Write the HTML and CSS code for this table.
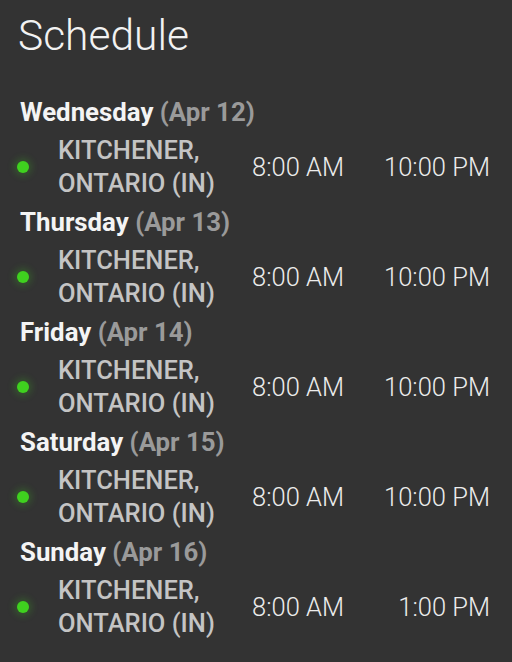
FILE: index.html
```html
<!DOCTYPE html>
<html>
<head>
<meta charset="utf-8">
<link rel="stylesheet" href="styles.css">
</head>
<body>
<div class="page">
  <h1 class="title">Schedule</h1>
  <div class="day">
    <div class="day-head"><span class="day-name">Wednesday</span> <span class="day-date">(Apr 12)</span></div>
    <div class="row"><span class="dot"></span><div class="loc">KITCHENER,<br>ONTARIO (IN)</div><div class="start">8:00 AM</div><div class="end">10:00 PM</div></div>
  </div>
  <div class="day">
    <div class="day-head"><span class="day-name">Thursday</span> <span class="day-date">(Apr 13)</span></div>
    <div class="row"><span class="dot"></span><div class="loc">KITCHENER,<br>ONTARIO (IN)</div><div class="start">8:00 AM</div><div class="end">10:00 PM</div></div>
  </div>
  <div class="day">
    <div class="day-head"><span class="day-name">Friday</span> <span class="day-date">(Apr 14)</span></div>
    <div class="row"><span class="dot"></span><div class="loc">KITCHENER,<br>ONTARIO (IN)</div><div class="start">8:00 AM</div><div class="end">10:00 PM</div></div>
  </div>
  <div class="day">
    <div class="day-head"><span class="day-name">Saturday</span> <span class="day-date">(Apr 15)</span></div>
    <div class="row"><span class="dot"></span><div class="loc">KITCHENER,<br>ONTARIO (IN)</div><div class="start">8:00 AM</div><div class="end">10:00 PM</div></div>
  </div>
  <div class="day">
    <div class="day-head"><span class="day-name">Sunday</span> <span class="day-date">(Apr 16)</span></div>
    <div class="row"><span class="dot"></span><div class="loc">KITCHENER,<br>ONTARIO (IN)</div><div class="start">8:00 AM</div><div class="end">1:00 PM</div></div>
  </div>
</div>
</body>
</html>
```
FILE: styles.css
```css
html, body {
  margin: 0;
  padding: 0;
  background: #333333;
}
body {
  font-family: Roboto, "Liberation Sans", sans-serif;
  color: #f0f0f0;
}
.page {
  padding: 12px 22px 0 20px;
}
.title {
  margin: 0 0 30px -2px;
  font-size: 42.5px;
  font-weight: 300;
  line-height: 48px;
  color: #f2f2f2;
}
.day-head {
  font-size: 25.8px;
  line-height: 44px;
}
.day-name {
  font-weight: 700;
  color: #f4f4f4;
}
.day-date {
  font-weight: 700;
  color: #9a9a9a;
}
.row {
  display: grid;
  grid-template-columns: 38px 194px 1fr auto;
  align-items: center;
}
.dot {
  width: 12px;
  height: 12px;
  border-radius: 50%;
  background: #3fd11f;
  box-shadow: 0 0 7px 3px rgba(63, 209, 31, 0.22);
  margin-left: -3px;
}
.loc {
  font-size: 25.5px;
  font-weight: 500;
  line-height: 33px;
  color: #c4c4c4;
}
.start, .end {
  font-size: 25.5px;
  font-weight: 300;
  color: #ececec;
}
.end {
  text-align: right;
}
```
